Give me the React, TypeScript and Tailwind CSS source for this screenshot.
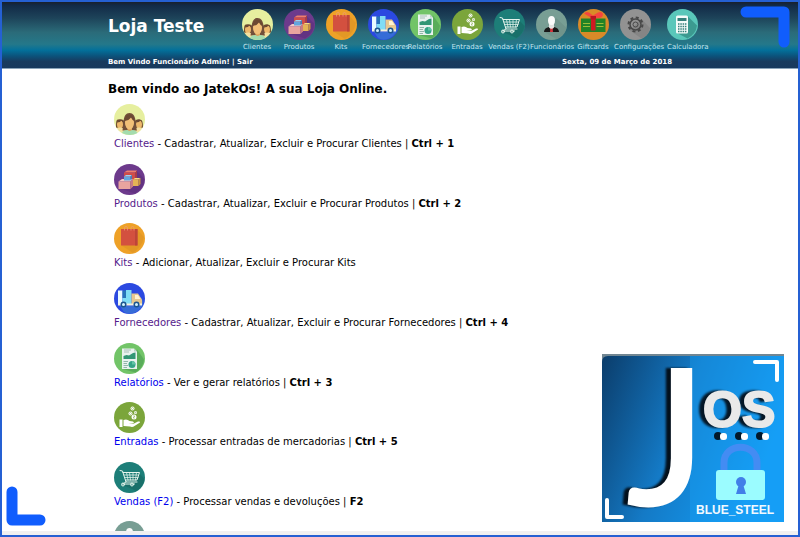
import React from "react";

function Disc({ fill, children }: { fill: string; children: React.ReactNode }) {
  return (
    <svg viewBox="0 0 62 62" className="block h-[31px] w-[31px] shrink-0" aria-hidden="true">
      <circle cx="31" cy="31" r="31" fill={fill} />
      {children}
    </svg>
  );
}

function ClientesIcon() {
  return (
    <Disc fill="#e6ef9f">
      <path d="M4 47c0-19 2-16 9-16s9 2 9 18zM41 48c0-17 2-17 8-17s9 0 9 16z" fill="#6f4c30" />
      <ellipse cx="12" cy="41" rx="6" ry="8" fill="#eeb96c" />
      <ellipse cx="50" cy="41" rx="6" ry="8" fill="#eeb96c" />
      <path d="M6 37q7 0 9-4 2 3 4 4-1-6-7-6t-6 6zM44 37q7 0 9-4 2 3 3 4-1-6-6-6t-6 6z" fill="#6b4932" />
      <path d="M6 49q6-4 13 0v8q-8-2-13-8zM43 49q7-4 13 0-4 6-13 9z" fill="#f5dfa0" />
      <path d="M17 53c3-10-1-35 14-35s12 25 15 35z" fill="#72503a" />
      <path d="M27 42h9v12h-9z" fill="#dba25a" />
      <ellipse cx="31" cy="38" rx="9" ry="13" fill="#f2c078" />
      <path d="M21 34q9-1 13-7 2 5 7 7-1-13-10-13t-10 13z" fill="#6b4932" />
      <path d="M16 58q2-6 11-6 4 4 9 0 8 0 11 6-15 8-31 0z" fill="#a4dcae" />
    </Disc>
  );
}

function ProdutosIcon() {
  return (
    <Disc fill="#6d3a8c">
      <path d="M44 13l16 16q1 18-18 30L14 50z" fill="#5c2f7c" opacity=".6" />
      <path d="M20 17l6-4h20l-3 4z" fill="#ee7f6c" />
      <path d="M20 17h23v15H20z" fill="#cf4d49" />
      <path d="M43 17l3-4v15l-3 4z" fill="#a93c43" />
      <path d="M38 31l4-3h11l-4 3z" fill="#f7dc82" />
      <path d="M38 31h11v13H38z" fill="#e4b455" />
      <path d="M49 31l4-3v12l-4 4z" fill="#c7953f" />
      <path d="M9 35l7-5h22l-5 5z" fill="#f6c9c5" />
      <path d="M9 35h24v15H9z" fill="#e8a49f" />
      <path d="M33 35l5-5v15l-5 5z" fill="#c97c82" />
      <path d="M20 25l4-3h12l-3 3z" fill="#9cd4f5" />
      <path d="M20 25h13v8H20z" fill="#62a6de" />
      <path d="M33 25l3-3v8l-3 3z" fill="#3e7fbd" />
    </Disc>
  );
}

function KitsIcon() {
  return (
    <Disc fill="#eea127">
      <path d="M15 45l32-31 13 14q-4 20-22 32z" fill="#dc9324" opacity=".6" />
      <path d="M14 12h33v33H14z" fill="#d3503f" />
      <path d="M42 12h5v33h-5z" fill="#bd4538" />
      <path d="M21 15v-5q0-3 3-3t3 3v5M34 15v-5q0-3 3-3t3 3v5" fill="none" stroke="#ec9a74" strokeWidth="1.5" />
    </Disc>
  );
}

function FornecedoresIcon() {
  return (
    <Disc fill="#2b49e0">
      <path d="M12 46h40l6-14q4 16-14 26-13 7-24 0z" fill="#3c7fd2" opacity=".65" />
      <path d="M8 15h9v29H8z" fill="#e9fbff" />
      <path d="M17 15h7v15h-7z" fill="#2672b8" />
      <path d="M24 14h11v30H17V30h7z" fill="#7fdcf5" />
      <path d="M35 21h13l8 12v11H35z" fill="#e6c88f" />
      <path d="M42 24h6l5 8H42z" fill="#fff3d0" />
      <path d="M8 41h48v4H8z" fill="#f5f2dc" />
      <circle cx="19" cy="43" r="6" fill="#1c558f" />
      <circle cx="19" cy="43" r="3" fill="#d3f3ff" />
      <circle cx="45" cy="43" r="6" fill="#1c558f" />
      <circle cx="45" cy="43" r="3" fill="#d3f3ff" />
    </Disc>
  );
}

function RelatoriosIcon() {
  return (
    <Disc fill="#72c468">
      <path d="M46 13l14 20q-1 16-17 26L17 52z" fill="#4fa354" opacity=".7" />
      <path d="M16 11h24l6 6v35H16z" fill="#e9f2ef" />
      <path d="M40 11v6h6z" fill="#b9cfc7" />
      <path d="M20 14h14M20 18h10" stroke="#a9c0b9" strokeWidth="2" />
      <path d="M19 32v-6l6-2 5 1 8-5 5-1v13z" fill="#329675" />
      <path d="M19 37h9M19 41h7M19 45h9M19 49h7" stroke="#92b6aa" strokeWidth="2" />
      <circle cx="36" cy="43" r="7" fill="#33a487" />
      <path d="M36 43v-7a7 7 0 0 1 7 7z" fill="#61c4a5" />
    </Disc>
  );
}

function EntradasIcon() {
  return (
    <Disc fill="#7ba53b">
      <g fill="#fff">
        <path d="M11 35h6v15h-6zM19 36q7-3 12 2l7 1q4 3-1 4h-8l9 1 10-5q5-1 4 2L41 48q-4 3-9 1l-13-1z" />
        <circle cx="37" cy="13" r="4" />
        <circle cx="33" cy="23" r="4" />
        <circle cx="43" cy="21" r="3" />
        <circle cx="40" cy="30" r="5" />
      </g>
      <g fill="none" stroke="#7ba53b" strokeWidth="1">
        <circle cx="37" cy="13" r="2" />
        <circle cx="33" cy="23" r="2" />
        <circle cx="43" cy="21" r="1" />
        <path d="M38 28h4l-4 4h4" />
      </g>
    </Disc>
  );
}

function VendasIcon() {
  return (
    <Disc fill="#1d7e78">
      <path d="M50 22l11 12q-2 15-16 24L17 46z" fill="#176760" opacity=".6" />
      <g fill="none" stroke="#e6f5ed" strokeWidth="2" strokeLinecap="round" strokeLinejoin="round">
        <path d="M12 17l5 1 7 22h22M18 21h33l-5 15H23M24 40l-7 4h24" />
        <path d="M20 26h29M22 31h26M25 21l3 15M31 21l2 15M38 21v15M45 21l-2 15" strokeWidth="1.5" />
        <circle cx="18" cy="45" r="3" />
        <circle cx="36" cy="45" r="3" />
      </g>
    </Disc>
  );
}

function FuncionariosIcon() {
  return (
    <Disc fill="#789e94">
      <path d="M40 18l21 20q-4 15-20 22L17 46z" fill="#678a81" opacity=".5" />
      <path d="M16 46q0-8 10-10h10q10 2 10 10z" fill="#171717" />
      <path d="M25 35h12l-6 8z" fill="#fff" />
      <path d="M29 38h4l1 8h-6z" fill="#d8343b" />
      <path d="M26 27h10v8l-5 5-5-5z" fill="#e3e5e2" />
      <ellipse cx="31" cy="23" rx="7" ry="9" fill="#fbfbfa" />
    </Disc>
  );
}

function GiftcardsIcon() {
  return (
    <Disc fill="#d98a28">
      <path d="M6 19h49v27H6z" fill="#238326" />
      <path d="M10 29h14M10 35h14M37 29h14M37 35h14" stroke="#9cbd38" strokeWidth="2" />
      <path d="M26 16h9v27h-9z" fill="#cf1b22" />
      <path d="M27 18L12 9q4-5 10-2l8 6 10-6q8-3 10 3 0 8-9 8H30z" fill="#f5443f" />
      <path d="M25 14h11v7H25z" fill="#b91421" />
    </Disc>
  );
}

function ConfiguracoesIcon() {
  return (
    <Disc fill="#929292">
      <path d="M43 20l17 18q-4 16-17 21L20 43z" fill="#777" opacity=".5" />
      <circle cx="31" cy="31" r="14" fill="none" stroke="#484848" strokeWidth="4" strokeDasharray="6 5" />
      <circle cx="31" cy="31" r="11" fill="none" stroke="#484848" strokeWidth="3" />
      <circle cx="31" cy="31" r="5" fill="none" stroke="#484848" strokeWidth="2" />
    </Disc>
  );
}

function CalculadoraIcon() {
  return (
    <Disc fill="#5ac7ba">
      <path d="M42 15l18 18q-2 17-19 26L20 48z" fill="#348f86" opacity=".8" />
      <rect x="18" y="13" width="24" height="36" rx="3" fill="#f4fbf9" />
      <path d="M21 18h18v6H21z" fill="#35807b" />
      <path d="M22 30h17M22 35h17M22 40h17M22 45h17" stroke="#35807b" strokeWidth="3" strokeDasharray="3 1.6" />
    </Disc>
  );
}

const modules = [
  { label: "Clientes", Icon: ClientesIcon },
  { label: "Produtos", Icon: ProdutosIcon },
  { label: "Kits", Icon: KitsIcon },
  { label: "Fornecedores", Icon: FornecedoresIcon },
  { label: "Relatórios", Icon: RelatoriosIcon },
  { label: "Entradas", Icon: EntradasIcon },
  { label: "Vendas (F2)", Icon: VendasIcon },
  { label: "Funcionários", Icon: FuncionariosIcon },
  { label: "Giftcards", Icon: GiftcardsIcon },
  { label: "Configurações", Icon: ConfiguracoesIcon },
];

const entries = [
  { label: "Clientes", text: "Cadastrar, Atualizar, Excluir e Procurar Clientes", keys: "Ctrl + 1", visited: true, Icon: ClientesIcon },
  { label: "Produtos", text: "Cadastrar, Atualizar, Excluir e Procurar Produtos", keys: "Ctrl + 2", visited: true, Icon: ProdutosIcon },
  { label: "Kits", text: "Adicionar, Atualizar, Excluir e Procurar Kits", keys: "", visited: true, Icon: KitsIcon },
  { label: "Fornecedores", text: "Cadastrar, Atualizar, Excluir e Procurar Fornecedores", keys: "Ctrl + 4", visited: true, Icon: FornecedoresIcon },
  { label: "Relatórios", text: "Ver e gerar relatórios", keys: "Ctrl + 3", visited: false, Icon: RelatoriosIcon },
  { label: "Entradas", text: "Processar entradas de mercadorias", keys: "Ctrl + 5", visited: false, Icon: EntradasIcon },
  { label: "Vendas (F2)", text: "Processar vendas e devoluções", keys: "F2", visited: false, Icon: VendasIcon },
];

function JosLogo() {
  return (
    <svg viewBox="0 0 182 168" className="block h-[168px] w-[182px]" role="img" aria-label="JOS Blue Steel">
      <defs>
        <linearGradient id="steel" x1="0" y1="0" x2="1" y2="0.35">
          <stop offset="0" stopColor="#0b3d6b" />
          <stop offset=".5" stopColor="#147ac6" />
          <stop offset="1" stopColor="#149cf4" />
        </linearGradient>
      </defs>
      <path d="M0 0h182v168H0z" fill="#718692" />
      <path d="M0 168V8q0-6 6-6h176v166z" fill="url(#steel)" />
      <path d="M88 2h94v166H88z" fill="#16a3fa" opacity=".35" />
      <text
        x="25"
        y="150"
        fontSize="188"
        fill="#fff"
        stroke="#fff"
        strokeWidth="3"
        className="font-['Lato',sans-serif] font-normal [filter:drop-shadow(-5px_0_1px_#03101c)]"
      >
        J
      </text>
      <g className="font-['Liberation_Sans',Arial,sans-serif] font-bold">
        <text
          x="101"
          y="73"
          fontSize="50"
          fill="#e9e9e9"
          stroke="#e9e9e9"
          strokeWidth="2"
          className="[filter:drop-shadow(-5px_0_1px_#041626)]"
        >
          OS
        </text>
        <text x="94" y="160" fontSize="12" fill="#f1f9ff">BLUE_STEEL</text>
      </g>
      <g fill="#03192b">
        <circle cx="116" cy="82" r="4" />
        <circle cx="137" cy="82" r="4" />
        <circle cx="158" cy="82" r="4" />
      </g>
      <g fill="#fff">
        <rect x="118" y="79" width="7" height="7" rx="3" />
        <rect x="139" y="79" width="7" height="7" rx="3" />
        <rect x="160" y="79" width="7" height="7" rx="3" />
      </g>
      <path d="M122 118v-9c0-21 33-21 33 0v9" fill="none" stroke="#438cf3" strokeWidth="7" />
      <rect x="114" y="116" width="49" height="30" rx="3" fill="#9bfcff" />
      <circle cx="139" cy="128" r="5" fill="#417fe8" />
      <path d="M137 130h4l3 10h-10z" fill="#417fe8" />
      <path d="M153 8h22v18M5 146v17h15" fill="none" stroke="#fff" strokeWidth="4" strokeLinecap="round" strokeLinejoin="round" />
    </svg>
  );
}

export default function App() {
  return (
    <div className="relative flex h-screen flex-col overflow-hidden border-2 border-[#2560d3] bg-white font-['DejaVu_Sans',sans-serif] text-black">
      <header className="shrink-0 border-b border-[#8ba3b8] bg-[linear-gradient(to_bottom,#19202c_0%,#122a47_5%,#1d4359_24%,#2b6b79_46%,#24788a_64%,#03709a_73%,#0c527b_82%,#193b5e_90%,#18395d_100%)] text-white">
        <div className="mx-auto w-[584px]">
          <div className="flex h-[55px] pt-[7px]">
            <h1 className="w-[128px] shrink-0 pt-[7px] text-[17px] leading-5 font-bold">Loja Teste</h1>
            <nav className="flex text-[7px] leading-[10px] text-[#c4e4ec]">
              {modules.map(({ label, Icon }) => (
                <a key={label} href="#" className="flex w-[42px] shrink-0 flex-col whitespace-nowrap">
                  <span className="flex justify-center"><Icon /></span>
                  <span className="mt-[2px] min-w-full self-start text-center">{label}</span>
                </a>
              ))}
              <a href="#" className="ml-[11px] flex shrink-0 flex-col whitespace-nowrap">
                <CalculadoraIcon />
                <span className="mt-[2px]">Calculadora</span>
              </a>
            </nav>
          </div>
          <div className="flex justify-between pr-5 pb-px text-[7px] leading-[10px] font-bold">
            <p>Bem Vindo Funcionário Admin! | <a href="#">Sair</a></p>
            <p>Sexta, 09 de Março de 2018</p>
          </div>
        </div>
      </header>
      <main className="min-h-0 flex-1 overflow-hidden">
        <div className="mx-auto w-[584px] pt-3">
          <h2 className="mb-[7px] text-[12px] leading-4 font-bold">Bem vindo ao JatekOs! A sua Loja Online.</h2>
          <ul className="grid min-h-[477px] auto-rows-fr pl-[6px] text-[10px] leading-4">
            {entries.map(({ label, text, keys, visited, Icon }) => (
              <li key={label}>
                <Icon />
                <p className="mt-px whitespace-nowrap">
                  <a href="#" className={visited ? "text-[#551a8b]" : "text-[#0000ee]"}>{label}</a>
                  {" - "}{text}
                  {keys && <>{" | "}<b>{keys}</b></>}
                </p>
              </li>
            ))}
            <li><FuncionariosIcon /></li>
          </ul>
        </div>
      </main>
      <div className="h-1 shrink-0 bg-[#f0f0f1]" />

      <div className="absolute right-[14px] bottom-[13px]"><JosLogo /></div>
      <svg viewBox="0 0 50 44" className="absolute top-[3px] right-[8px] h-[44px] w-[50px]" aria-hidden="true">
        <path d="M6 7h38v30" fill="none" stroke="#105dfd" strokeWidth="11" strokeLinecap="round" strokeLinejoin="round" />
      </svg>
      <svg viewBox="0 0 40 40" className="absolute bottom-[9px] left-[4px] h-[40px] w-[40px]" aria-hidden="true">
        <path d="M6 6v28h28" fill="none" stroke="#105dfd" strokeWidth="11" strokeLinecap="round" strokeLinejoin="round" />
      </svg>
    </div>
  );
}
